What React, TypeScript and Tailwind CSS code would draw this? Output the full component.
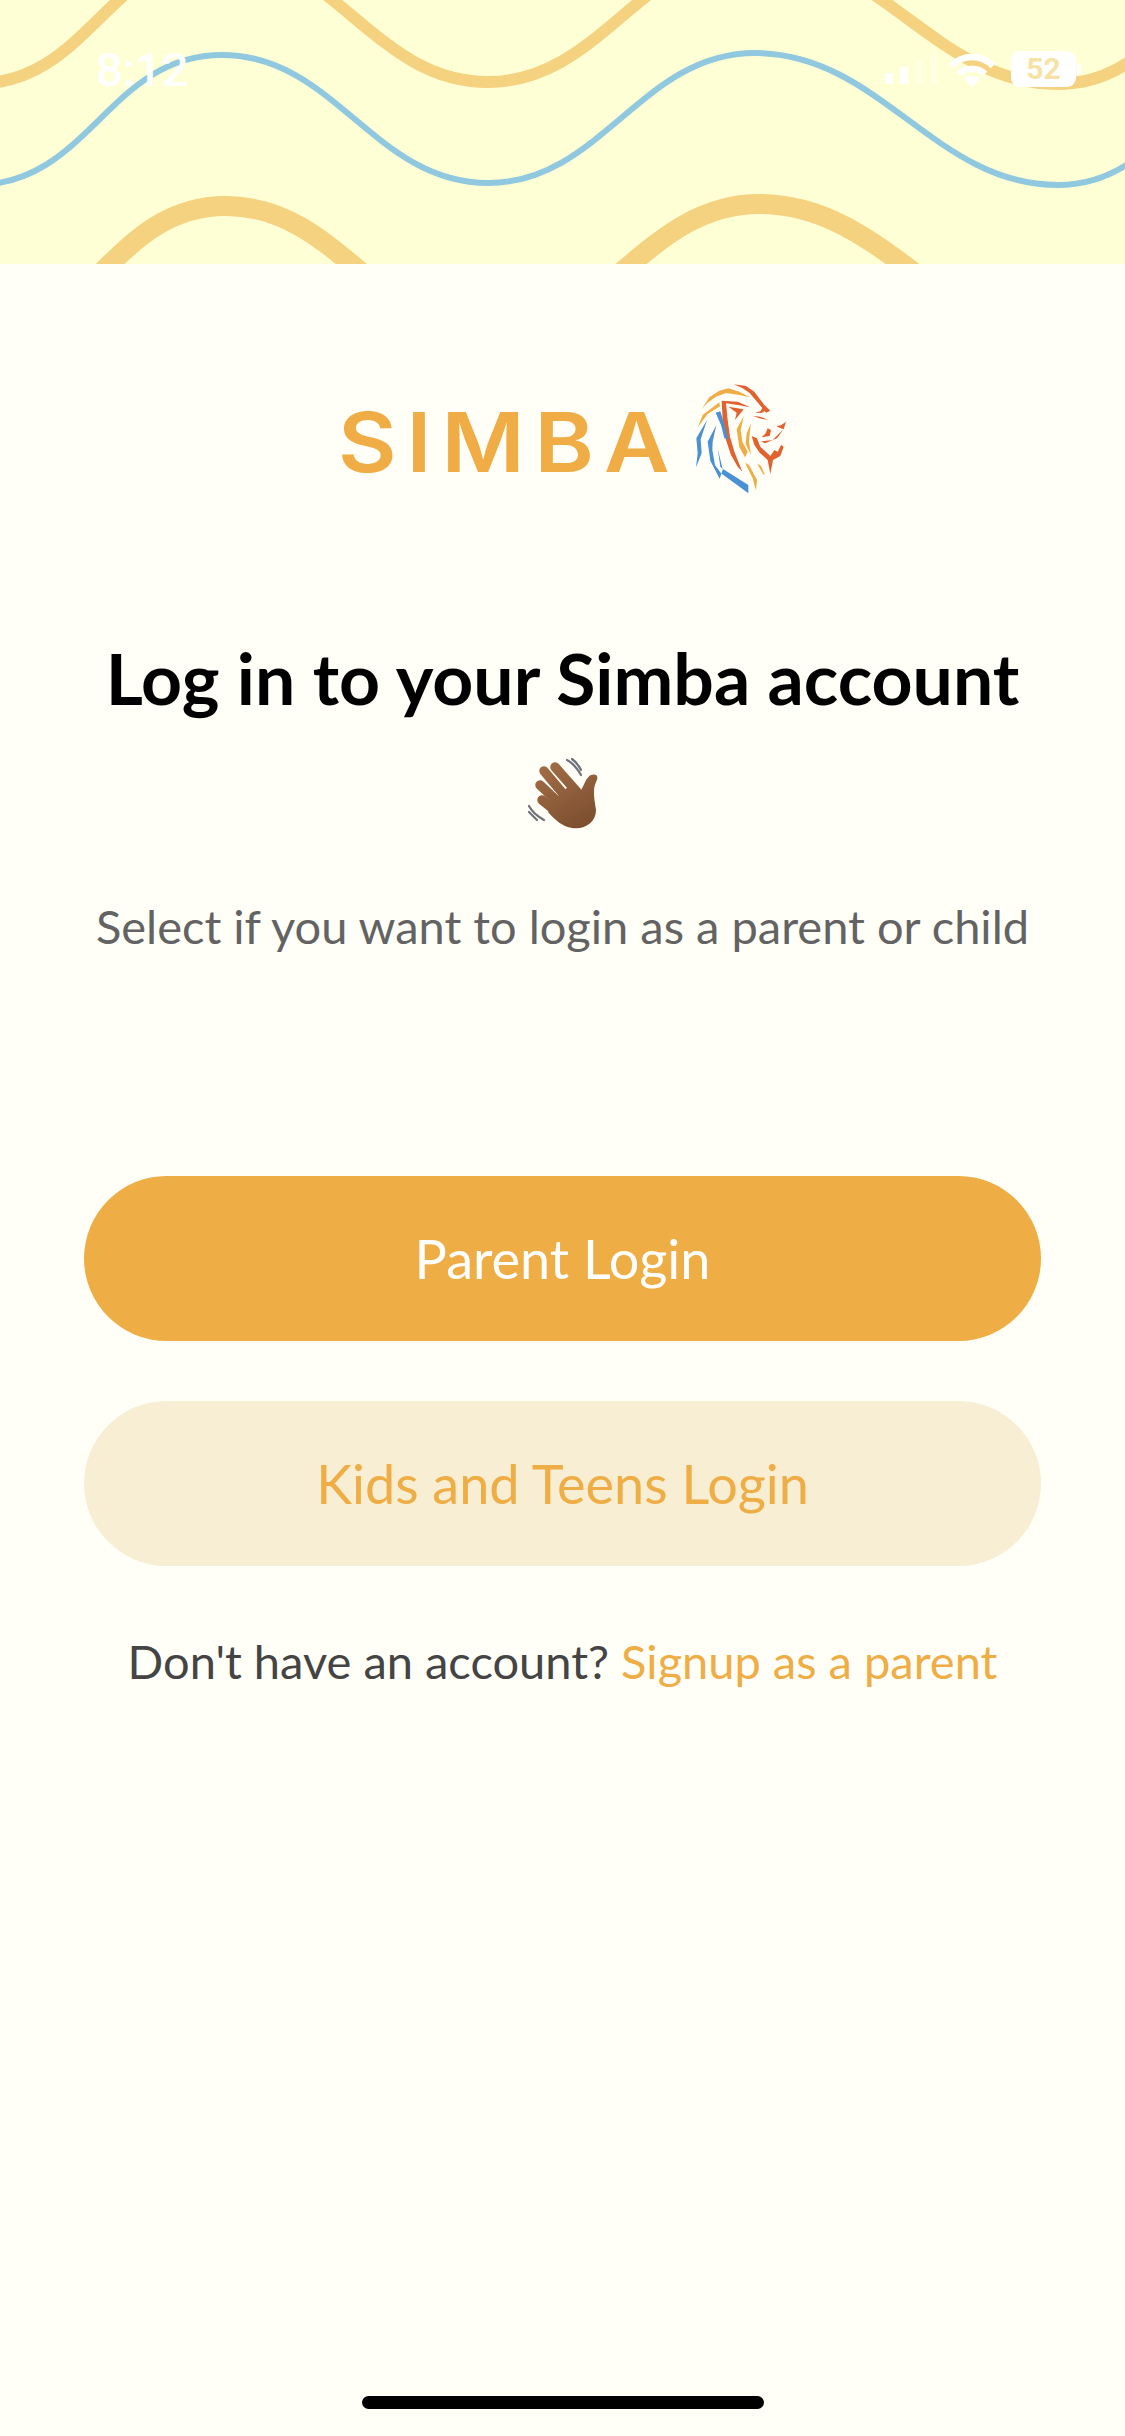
const WAVE = "M-25 185 C90 185 108 55 222 55 C335 55 374 183 488 183 C601 183 641 53 755 53 C880 53 934 185 1058 185 C1130 185 1170 130 1210 70";

export default function App() {
  return (
    <div className="relative flex h-[2436px] w-[1125px] flex-col items-center overflow-hidden bg-[#FFFFF8] font-['Lato',sans-serif]">
      <header className="relative h-[264px] w-full shrink-0 overflow-hidden bg-[#FFFFD5]">
        <svg className="absolute inset-0" width="1125" height="264" viewBox="0 0 1125 264" fill="none">
          <path d={WAVE} transform="translate(0 -101)" stroke="#F5D27F" strokeWidth="12" />
          <path d={WAVE} stroke="#90C8DF" strokeWidth="6" />
          <path d={WAVE} transform="translate(4 151)" stroke="#F5D27F" strokeWidth="20" />
        </svg>
        <div className="relative mt-[51px] flex h-[36px] items-center justify-between pl-[96px] pr-[44px]">
          <span className="font-['Roboto',sans-serif] text-[47px] font-medium leading-none text-white">8:12</span>
          <div className="flex items-end">
            <svg width="60" height="36" viewBox="0 0 60 36" fill="#fff" className="mr-[6px]">
              <rect x="2" y="22" width="8" height="11" rx="2.5" />
              <rect x="17" y="16" width="8" height="17" rx="2.5" />
              <rect x="32" y="10" width="8" height="23" rx="2.5" opacity="0.3" />
              <rect x="47" y="3" width="8" height="30" rx="2.5" opacity="0.3" />
            </svg>
            <svg width="46" height="34" viewBox="0 0 46 34" fill="none" stroke="#fff" className="mr-[16px]">
              <path d="M2 13 C14 1 32 1 44 13" strokeWidth="6.5" />
              <path d="M10 21 C17 14 29 14 36 21" strokeWidth="6.5" />
              <path d="M23 34 L15 26 C19 22 27 22 31 26 Z" fill="#fff" stroke="none" />
            </svg>
            <div className="flex items-center">
              <div className="flex h-[36px] w-[65px] items-center justify-center rounded-[9px] bg-white font-['Roboto',sans-serif] text-[30px] font-bold leading-none text-[#F7E2A6]">52</div>
              <div className="ml-[1px] h-[12px] w-[4px] rounded-r-full bg-white" />
            </div>
          </div>
        </div>
      </header>

      <div className="ml-[31px] mt-[106px] flex h-[130px] items-center self-start pl-[307px]">
        <span className="mt-[16px] origin-left scale-x-[1.1] font-['Inter',sans-serif] text-[82px] font-semibold leading-none tracking-[9px] text-[#F0AD45]">SIMBA</span>
        <svg width="130" height="130" viewBox="0 0 390 390" className="ml-[23px] shrink-0">
          <g fill="#F0AD45">
            <polygon points="92,118 115,82 145,62 172,55 205,65 238,82 205,75 165,69 135,80 108,100" />
            <polygon points="80,172 95,135 145,97 147,109 110,132" />
            <polygon points="218,138 197,178 205,232 222,262 230,245 214,215 209,180" />
            <polygon points="240,160 227,190 224,222 240,255 234,215 236,190" />
            <polygon points="222,278 234,285 258,330 255,362 245,325" />
            <polygon points="258,280 270,288 282,314 276,312" />
          </g>
          <g fill="#E2622F">
            <polygon points="188,43 225,48 250,65 280,105 298,122 285,128 262,100 235,68 215,55" />
            <polygon points="152,92 200,95 238,112 205,106 165,100 170,150 177,200 190,245 214,305 200,290 180,255 165,210 155,150" />
            <polygon points="172,110 218,118 192,150 197,128" />
            <polygon points="275,113 283,122 272,129 252,128 268,124" />
            <polygon points="245,137 268,140 292,150 265,145" />
            <polygon points="345,155 338,178 322,172 316,168 330,166" />
            <polygon points="338,178 318,205 282,220 270,214 305,210 325,190" />
            <polygon points="290,175 300,180 296,198 272,202 284,190" />
            <polygon points="242,198 258,205 268,230 298,258 310,240 320,245 330,225 338,230 328,258 306,270 298,312 290,270 266,248 250,225" />
          </g>
          <g fill="#4A90D4">
            <polygon points="134,128 148,124 162,170 172,208 160,205 150,165" />
            <polygon points="108,150 76,205 80,250 75,292 92,250 89,208" />
            <polygon points="136,165 110,215 118,272 146,326 156,297 232,345 232,370 150,310 132,285 124,240 125,215" />
            <polygon points="140,235 148,290 155,297 146,260" />
          </g>
        </svg>
      </div>

      <h1 className="mt-[122px] whitespace-nowrap text-center text-[71.5px] font-bold leading-[110px] text-black">Log in to your Simba account</h1>
      <svg width="120" height="100" viewBox="0 0 120 100" className="ml-[-4px] mt-[8px] shrink-0">
        <defs>
          <linearGradient id="hand" gradientUnits="userSpaceOnUse" x1="45" y1="25" x2="80" y2="90">
            <stop offset="0" stopColor="#A06C45" />
            <stop offset="1" stopColor="#7C4E2F" />
          </linearGradient>
        </defs>
        <g stroke="url(#hand)" strokeWidth="9.5" strokeLinecap="round" fill="none">
          <path d="M54 27 L76 52" />
          <path d="M43 31 L64 56" />
          <path d="M39 45 L58 63" />
          <path d="M41 60 L56 72" />
        </g>
        <path d="M58 55 L68 46 L80 50 C83 46 85 37 90 35 C96 33 98 37 95 42 C91 50 94 62 95 70 C95 82 84 90 71 88 C62 87 54 80 47 72 Z" fill="url(#hand)" />
        <path d="M66 20 C72 23 76 28 80 35 M71 19 C75 22 78 26 80 30" stroke="#6E7378" strokeWidth="2.2" fill="none" strokeLinecap="round" />
        <path d="M28 66 C31 72 36 76 43 80 M28 72 C31 75 34 78 36 80" stroke="#6E7378" strokeWidth="2.2" fill="none" strokeLinecap="round" />
      </svg>
      <p className="mt-[51px] whitespace-nowrap text-center text-[47px] leading-[70px] text-[#636363]">Select if you want to login as a parent or child</p>

      <button className="mt-[215px] flex h-[165px] w-[957px] shrink-0 items-center justify-center rounded-[83px] bg-[#EFAD45] text-[54px] text-white">Parent Login</button>
      <button className="mt-[60px] flex h-[165px] w-[957px] shrink-0 items-center justify-center rounded-[83px] bg-[#F7EED3] text-[54px] text-[#EFAD45]">Kids and Teens Login</button>
      <p className="mt-[60px] whitespace-nowrap text-center text-[47px] leading-[70px] text-[#444444]">
        Don't have an account? <span className="text-[#EFAD45]">Signup as a parent</span>
      </p>

      <div className="absolute bottom-[27px] left-[362px] h-[13px] w-[402px] rounded-full bg-black" />
    </div>
  );
}
